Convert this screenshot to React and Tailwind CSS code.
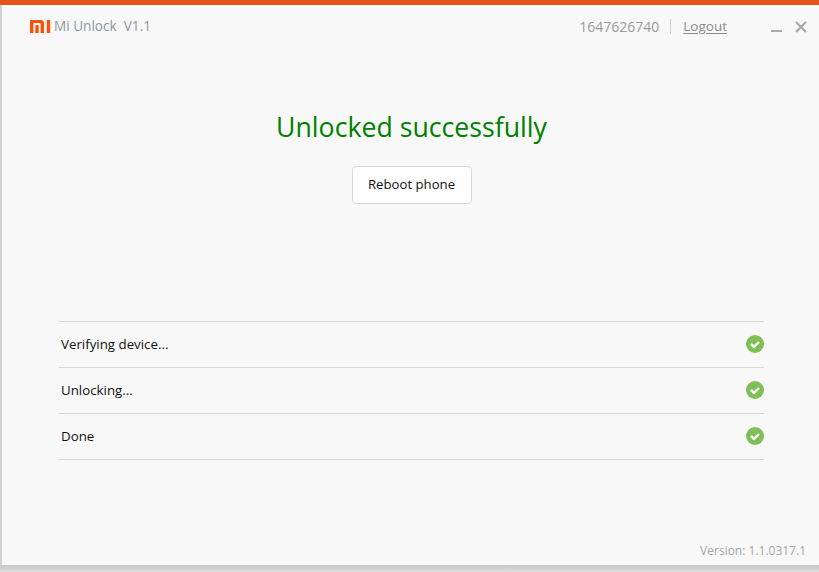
import React from 'react';

const font = { fontFamily: '"Open Sans", "Noto Sans", sans-serif' };

const STEPS = ['Verifying device...', 'Unlocking...', 'Done'];

function MiLogo() {
    return (
        <svg width="21" height="13" viewBox="0 0 21 13" className="shrink-0">
            <path d="M0 0H10.5Q14 0 14 3.5V13H10.6V4.2Q10.6 3 9.4 3H3.4V13H0Z" fill="#f9500a" />
            <rect x="5.3" y="5.2" width="3.4" height="7.8" fill="#f9500a" />
            <rect x="16.8" y="0" width="3.4" height="13" fill="#f9500a" />
        </svg>
    );
}

function CheckIcon() {
    return (
        <svg width="18" height="18" viewBox="0 0 18 18" className="shrink-0 mb-[2px]">
            <circle cx="9" cy="9" r="9" fill="#7fbf56" />
            <path d="M5 9L8 11.8L13 7" fill="none" stroke="#ffffff" strokeWidth="2.4" />
        </svg>
    );
}

export default function App() {
    return (
        <div className="w-[819px] h-[572px] overflow-hidden flex flex-col bg-[#d4d4d4]" style={font}>
            <div className="h-[5px] shrink-0 bg-[#e2521a]"></div>
            <div className="flex-1 flex min-h-0">
                <div className="w-[2px] shrink-0 bg-[#d2d2d2]"></div>
                <div className="flex-1 flex flex-col bg-[#f8f8f8]">
                    {/* 标题栏 */}
                    <div className="h-[42px] shrink-0 flex items-center pl-[28px] pr-[12px]">
                        <MiLogo />
                        <span className="ml-[3px] text-[13.6px] text-[#8f97a3]">Mi Unlock&nbsp; V1.1</span>
                        <span className="ml-auto text-[14px] text-[#999999]">1647626740</span>
                        <div className="w-px h-[15px] ml-[11px] mr-[12px] bg-[#d0d0d0]"></div>
                        <span className="text-[13.5px] text-[#8c8c8c] underline underline-offset-2">Logout</span>
                        <svg width="12" height="12" viewBox="0 0 12 12" className="ml-[44px] mt-[4px]">
                            <rect x="0" y="8" width="11" height="2" fill="#a8a8a8" />
                        </svg>
                        <svg width="12" height="12" viewBox="0 0 12 12" className="ml-[12px] mt-[1px]">
                            <path d="M1 1L11 11M11 1L1 11" stroke="#a8a8a8" strokeWidth="2.2" />
                        </svg>
                    </div>

                    <div className="flex flex-col items-center pl-[2px]">
                        <h1 className="mt-[58px] text-[26.7px] leading-[44px] text-[#008000] font-normal">Unlocked successfully</h1>
                        <button className="mt-[17px] w-[120px] h-[38px] bg-white border border-[#d8d8d8] rounded-[4px] text-[13.2px] text-[#111111]">Reboot phone</button>
                    </div>

                    {/* 步骤列表 */}
                    <div className="mt-[117px] ml-[57px] w-[705px] border-t border-[#d6d6d6]">
                        {STEPS.map((step) => (
                            <div key={step} className="h-[46px] flex items-center justify-between pl-[2px] border-b border-[#d6d6d6]">
                                <span className="text-[13.3px] text-[#111111]">{step}</span>
                                <CheckIcon />
                            </div>
                        ))}
                    </div>

                    <div className="mt-auto pb-[5px] pr-[13px] text-right text-[12px] text-[#a4a4a4]">Version: 1.1.0317.1</div>
                </div>
            </div>
            <div className="h-[7px] shrink-0 bg-gradient-to-b from-[#c6c6c6] to-[#dedede]"></div>
        </div>
    );
}
